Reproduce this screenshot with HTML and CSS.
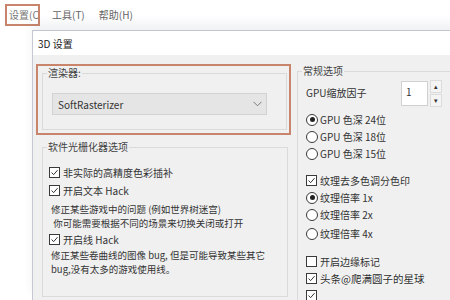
FILE: index.html
```html
<!doctype html>
<html lang="zh">

<head>
    <meta charset="utf-8">
    <title>3D 设置</title>
    <link rel="stylesheet" href="styles.css">
</head>

<body>
    <div class="menubar">
        <span class="menu-item menu-active">设置(C</span>
        <span class="menu-item">工具(T)</span>
        <span class="menu-item">帮助(H)</span>
    </div>
    <div class="workspace">
        <div class="dialog">
            <div class="titlebar">3D 设置</div>
            <div class="content">
                <div class="col-left">
                    <div class="annot">
                        <fieldset class="group renderer">
                            <legend>渲染器:</legend>
                            <div class="select">
                                <span>SoftRasterizer</span>
                                <svg class="chevron" width="9" height="6" viewBox="0 0 9 6"><polyline points="0.5,0.8 4.5,4.8 8.5,0.8" fill="none" stroke="#7a7a7a" stroke-width="1"/></svg>
                            </div>
                        </fieldset>
                    </div>
                    <fieldset class="group soft">
                        <legend>软件光栅化器选项</legend>
                        <div class="group-body">
                            <div class="row"><span class="check on"><svg viewBox="0 0 10 10"><polyline points="1.8,5 4,7.4 8.4,2.4" fill="none" stroke="#333" stroke-width="1.1"/></svg></span>非实际的高精度色彩插补</div>
                            <div class="row"><span class="check on"><svg viewBox="0 0 10 10"><polyline points="1.8,5 4,7.4 8.4,2.4" fill="none" stroke="#333" stroke-width="1.1"/></svg></span>开启文本 Hack</div>
                            <p class="desc first">修正某些游戏中的问题 (例如世界树迷宫)<br>&nbsp;你可能需要根据不同的场景来切换关闭或打开</p>
                            <div class="row tight"><span class="check on"><svg viewBox="0 0 10 10"><polyline points="1.8,5 4,7.4 8.4,2.4" fill="none" stroke="#333" stroke-width="1.1"/></svg></span>开启线 Hack</div>
                            <p class="desc">修正某些卷曲线的图像 bug, 但是可能导致某些其它<br>bug,没有太多的游戏使用线。</p>
                        </div>
                    </fieldset>
                </div>
                <div class="col-right">
                    <fieldset class="group general">
                        <legend>常规选项</legend>
                        <div class="group-body">
                            <div class="spin-row">
                                <span class="spin-label">GPU缩放因子</span>
                                <span class="spin-input">1</span>
                                <span class="spin-btns">
                                    <span class="spin-btn">▴</span>
                                    <span class="spin-btn">▾</span>
                                </span>
                            </div>
                            <div class="opt radios">
                                <div class="row"><span class="radio on"></span>GPU 色深 24位</div>
                                <div class="row"><span class="radio"></span>GPU 色深 18位</div>
                                <div class="row"><span class="radio"></span>GPU 色深 15位</div>
                            </div>
                            <div class="opt tex">
                                <div class="row"><span class="check on"><svg viewBox="0 0 10 10"><polyline points="1.8,5 4,7.4 8.4,2.4" fill="none" stroke="#333" stroke-width="1.1"/></svg></span>纹理去多色调分色印</div>
                                <div class="row"><span class="radio on"></span>纹理倍率 1x</div>
                                <div class="row"><span class="radio"></span>纹理倍率 2x</div>
                                <div class="row last"><span class="radio"></span>纹理倍率 4x</div>
                            </div>
                            <div class="opt edge">
                                <div class="row"><span class="check"></span>开启边缘标记</div>
                                <div class="row"><span class="check on"><svg viewBox="0 0 10 10"><polyline points="1.8,5 4,7.4 8.4,2.4" fill="none" stroke="#333" stroke-width="1.1"/></svg></span><span class="mark">头条@爬满圆子的星球</span></div>
                                <div class="row"><span class="check on"><svg viewBox="0 0 10 10"><polyline points="1.8,5 4,7.4 8.4,2.4" fill="none" stroke="#333" stroke-width="1.1"/></svg></span></div>
                            </div>
                        </div>
                    </fieldset>
                </div>
            </div>
        </div>
    </div>
</body>

</html>
```

FILE: styles.css
```css
html,
body {
    width: 450px;
    height: 300px;
    margin: 0;
    padding: 0;
    overflow: hidden;
    background: #fff;
    font-family: "Noto Sans CJK SC", sans-serif;
    font-size: 10px;
    color: #333;
}

.menubar {
    height: 30px;
    display: flex;
    align-items: center;
    padding-left: 5px;
    box-sizing: border-box;
}

.menu-item {
    color: #666;
    margin-right: 14px;
    line-height: 14px;
}

.menu-active {
    border: 2px solid #c8856b;
    padding: 2px 0 2px 2px;
    margin-right: 12px;
    width: 29px;
    overflow: hidden;
    white-space: nowrap;
    color: #777;
}

.workspace {
    height: 270px;
    padding-left: 32px;
    display: flex;
}

.dialog {
    flex: 1;
    display: flex;
    flex-direction: column;
    border-left: 1px solid #c6c9d3;
    border-top: 1px solid #c3c6d0;
    box-shadow: 0 -8px 9px rgba(60, 70, 100, 0.07);
}

.titlebar {
    height: 24px;
    background: #fff;
    padding-left: 5px;
    display: flex;
    align-items: center;
    color: #222;
}

.content {
    flex: 1;
    background: #f0f0f0;
    padding: 9px 0 0 3px;
    display: flex;
    gap: 6px;
    overflow: hidden;
}

.col-left {
    width: 255px;
    flex: none;
}

.col-right {
    flex: 1;
    min-width: 0;
}

.group {
    margin: 0;
    padding: 0;
    border: 1px solid #dadada;
    min-width: 0;
}

.group legend {
    margin-left: 4px;
    padding: 0 1px;
    line-height: 14px;
    color: #444;
}

.annot {
    border: 2px solid #c8856b;
    padding: 0 2px 3px 4px;
}

.select {
    height: 20px;
    margin: 13px 19px 14px 9px;
    background: #e5e5e5;
    border: 1px solid #d2d2d2;
    display: flex;
    align-items: center;
    justify-content: space-between;
    padding: 0 4px 0 5px;
    color: #333;
}

.soft {
    margin: 5px 3px 0 6px;
}

.group-body {
    padding: 9px 0 20px 6px;
}

.row {
    height: 18px;
    display: flex;
    align-items: center;
    white-space: nowrap;
}

.row.tight {
    margin-top: 0;
}

.check {
    width: 9px;
    height: 9px;
    border: 1px solid #3a3a3a;
    background: #fff;
    margin-right: 3px;
    flex: none;
    display: flex;
}

.check svg {
    width: 9px;
    height: 9px;
}

.radio {
    width: 10px;
    height: 10px;
    border: 1px solid #3a3a3a;
    border-radius: 50%;
    background: #fff;
    margin-right: 2px;
    flex: none;
    display: flex;
    align-items: center;
    justify-content: center;
}

.radio.on::after {
    content: "";
    width: 5px;
    height: 5px;
    border-radius: 50%;
    background: #222;
}

.desc {
    margin: 0 0 0 2px;
    font-size: 9.5px;
    line-height: 14px;
    color: #333;
    white-space: nowrap;
}

.desc.first {
    margin-top: 3px;
}

.general {
    width: 200px;
    border-right: none;
}

.general .group-body {
    padding: 3px 0 0 8px;
}

.spin-row {
    height: 25px;
    display: flex;
    align-items: center;
}

.spin-label {
    width: 95px;
    margin-top: -3px;
}

.spin-input {
    background: #fff;
    border: 1px solid #d0d0d0;
    padding: 2px 0 0 4px;
    box-sizing: border-box;
    width: 27px;
    height: 25px;
}

.spin-btns {
    margin-left: 2px;
    display: flex;
    flex-direction: column;
}

.spin-btn {
    width: 10px;
    height: 11px;
    font-size: 7px;
    line-height: 11px;
    text-align: center;
    color: #333;
    background: #f4f4f4;
    border: 1px solid #dcdcdc;
    margin-bottom: 1px;
}

.radios {
    margin-top: 5px;
}

.opt .row {
    height: 17px;
}

.tex {
    margin-top: 10px;
}

.tex .row.last {
    margin-top: 2px;
}

.edge {
    margin-top: 11px;
}

.mark {
    color: #2a2a2a;
    text-shadow: 0 0 2px #fff, 0 0 1px #fff;
    font-size: 10.5px;
}
```
